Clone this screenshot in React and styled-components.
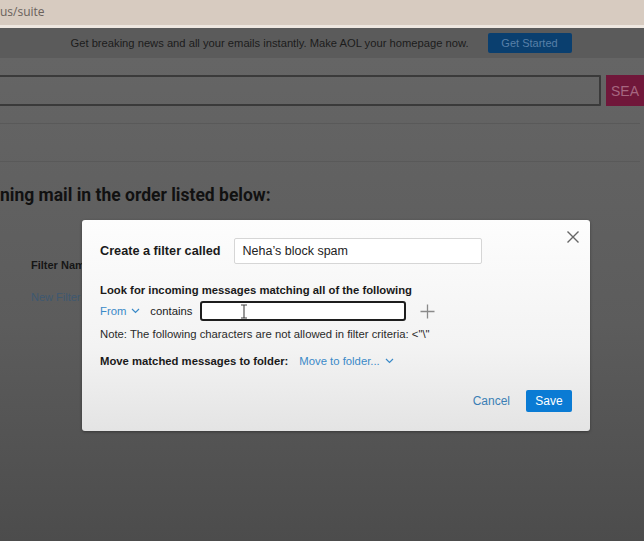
import React from "react";
import styled, { createGlobalStyle } from "styled-components";

const GlobalStyle = createGlobalStyle`
  html, body {
    margin: 0;
    padding: 0;
    width: 644px;
    height: 541px;
    overflow: hidden;
    font-family: "Liberation Sans", Arial, sans-serif;
  }
  * { box-sizing: border-box; }
`;

const Screen = styled.div`
  position: relative;
  width: 644px;
  height: 541px;
  overflow: hidden;
  display: flex;
  flex-direction: column;
  background: linear-gradient(#676767, #5c5c5c 60%, #4c4c4c);
`;

const AddressBar = styled.div`
  height: 28px;
  flex-shrink: 0;
  background: #d7cbc0;
  border-bottom: 3px solid #eee7e0;
  display: flex;
  align-items: center;
  padding-bottom: 3px;
  font-family: "Open Sans", "Liberation Sans", sans-serif;
  font-size: 12px;
  color: #6a625c;
`;

const Banner = styled.div`
  height: 30px;
  flex-shrink: 0;
  background: #5b5b5b;
  display: flex;
  align-items: center;
  justify-content: center;
  gap: 19px;
  padding-right: 2px;
  font-size: 11.2px;
  color: #1c1c1c;
`;

const BannerButton = styled.span`
  width: 84px;
  height: 20px;
  border-radius: 2px;
  background: #0a3f6f;
  color: #5880a8;
  font-size: 11px;
  display: flex;
  align-items: center;
  justify-content: center;
`;

const SearchRow = styled.div`
  display: flex;
  height: 31px;
  margin: 17px 0 0 -4px;
`;

const SearchInput = styled.div`
  flex: 1;
  border: 2px solid #3a3a3a;
  border-radius: 1px;
`;

const SearchButton = styled.div`
  width: 38px;
  margin-left: 5px;
  background: #70173a;
  color: #a66680;
  font-size: 14px;
  display: flex;
  align-items: center;
  padding-left: 5px;
  overflow: hidden;
  white-space: nowrap;
`;

const NavStrip = styled.div`
  height: 39px;
  margin-top: 17px;
  border-top: 1px solid #595959;
  border-bottom: 1px solid #595959;
  margin-right: 4px;
`;

const Heading = styled.h2`
  margin: 23px 0 0;
  font-family: Roboto, "Liberation Sans", sans-serif;
  font-size: 17.5px;
  font-weight: 700;
  color: #111;
`;

const TableHead = styled.div`
  margin: 54px 0 0 31px;
  font-size: 11px;
  font-weight: 700;
  color: #161616;
`;

const NewFilterLink = styled.div`
  margin: 20px 0 0 31px;
  font-size: 11px;
  color: #3e5870;
`;

const Modal = styled.div`
  position: absolute;
  left: 82px;
  top: 220px;
  width: 508px;
  height: 211px;
  border-radius: 3px;
  background: linear-gradient(#fdfdfd, #f3f3f3 60%, #e4e4e4);
  box-shadow: 0 1px 3px rgba(0, 0, 0, 0.35);
  padding: 18px 18px 19px;
  display: flex;
  flex-direction: column;
  color: #1a1a1a;
  font-size: 11.3px;
`;

const CloseButton = styled.button`
  position: absolute;
  top: 10px;
  right: 10px;
  width: 14px;
  height: 14px;
  padding: 0;
  border: 0;
  background: none;
  display: flex;
`;

const Row = styled.div`
  display: flex;
  align-items: center;
  margin-top: ${(p) => p.$mt || 0}px;
`;

const BoldLabel = styled.span`
  font-weight: 700;
  font-size: ${(p) => p.$size || 11.3}px;
  margin-right: ${(p) => p.$gap || 0}px;
`;

const NameInput = styled.div`
  width: 248px;
  height: 26px;
  border: 1px solid #d6d6d6;
  border-radius: 2px;
  background: #fff;
  display: flex;
  align-items: center;
  padding-left: 8px;
  font-size: 12.5px;
  color: #222;
`;

const LinkText = styled.span`
  color: #3a8ac8;
  display: inline-flex;
  align-items: center;
  gap: 5px;
`;

const Plain = styled.span`
  margin: 0 8px 0 10px;
`;

const ValueInput = styled.div`
  position: relative;
  width: 206px;
  height: 20px;
  border: 2px solid #1e1e1e;
  border-radius: 3px;
  background: #fff;
`;

const Cursor = styled.svg`
  position: absolute;
  left: 38px;
  top: 1px;
`;

const AddButton = styled.span`
  margin-left: 14px;
  display: flex;
`;

const Note = styled.div`
  margin-top: 7px;
  color: #2a2a2a;
`;

const Footer = styled.div`
  margin-top: auto;
  display: flex;
  justify-content: flex-end;
  align-items: center;
  gap: 16px;
`;

const CancelButton = styled.span`
  color: #3b7fb5;
  font-size: 12px;
`;

const SaveButton = styled.span`
  width: 46px;
  height: 22px;
  border-radius: 2px;
  background: #0a7bd4;
  color: #fff;
  font-size: 12px;
  display: flex;
  align-items: center;
  justify-content: center;
`;

const Chevron = () => (
  <svg width="9" height="6" viewBox="0 0 9 6">
    <polyline points="1,1 4.5,4.5 8,1" fill="none" stroke="currentColor" strokeWidth="1.2" />
  </svg>
);

const App = () => (
  <>
    <GlobalStyle />
    <Screen>
      <AddressBar>us/suite</AddressBar>
      <Banner>
        <span>Get breaking news and all your emails instantly. Make AOL your homepage now.</span>
        <BannerButton>Get Started</BannerButton>
      </Banner>
      <SearchRow>
        <SearchInput />
        <SearchButton>SEA</SearchButton>
      </SearchRow>
      <NavStrip />
      <Heading>ning mail in the order listed below:</Heading>
      <TableHead>Filter Name</TableHead>
      <NewFilterLink>New Filter</NewFilterLink>

      <Modal>
        <CloseButton aria-label="Close">
          <svg width="14" height="14" viewBox="0 0 14 14">
            <path d="M1.5 1.5 L12.5 12.5 M12.5 1.5 L1.5 12.5" stroke="#666" strokeWidth="1.4" />
          </svg>
        </CloseButton>

        <Row>
          <BoldLabel $size={12.7} $gap={13}>Create a filter called</BoldLabel>
          <NameInput>Neha’s block spam</NameInput>
        </Row>

        <Row $mt={20}>
          <BoldLabel>Look for incoming messages matching all of the following</BoldLabel>
        </Row>

        <Row $mt={5}>
          <LinkText>
            From <Chevron />
          </LinkText>
          <Plain>contains</Plain>
          <ValueInput>
            <Cursor width="8" height="15" viewBox="0 0 8 15">
              <path d="M1 1 H7 M4 1 V14 M1 14 H7" stroke="#444" strokeWidth="1.1" fill="none" />
            </Cursor>
          </ValueInput>
          <AddButton>
            <svg width="15" height="15" viewBox="0 0 15 15">
              <path d="M7.5 0.5 V14.5 M0.5 7.5 H14.5" stroke="#8a8a8a" strokeWidth="1.3" />
            </svg>
          </AddButton>
        </Row>

        <Note>Note: The following characters are not allowed in filter criteria: &lt;"\"</Note>

        <Row $mt={15}>
          <BoldLabel $gap={11}>Move matched messages to folder:</BoldLabel>
          <LinkText>
            Move to folder... <Chevron />
          </LinkText>
        </Row>

        <Footer>
          <CancelButton>Cancel</CancelButton>
          <SaveButton>Save</SaveButton>
        </Footer>
      </Modal>
    </Screen>
  </>
);

export default App;
